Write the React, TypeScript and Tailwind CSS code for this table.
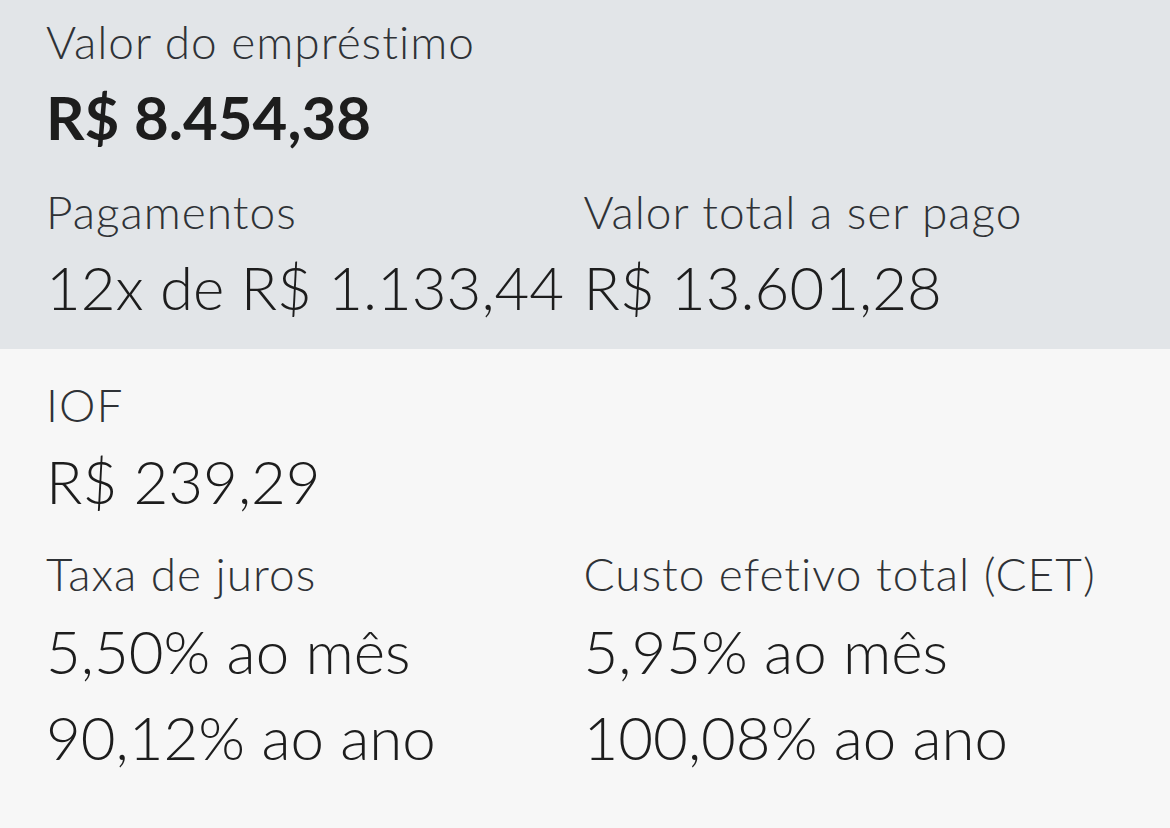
import React from 'react';

const font = { fontFamily: 'Lato, "Open Sans", sans-serif' };

const Label: React.FC<{ children: React.ReactNode }> = ({ children }) => (
  <div className="text-[46px] leading-[56px] font-light tracking-[1px] text-[#2f3236] whitespace-nowrap">{children}</div>
);

const Value: React.FC<{ children: React.ReactNode; bold?: boolean }> = ({ children, bold }) => (
  <div
    className={
      bold
        ? 'text-[60px] leading-[80px] font-bold text-[#1d1d1d] whitespace-nowrap'
        : 'text-[60px] leading-[80px] font-light text-[#1d1d1d] whitespace-nowrap'
    }
  >
    {children}
  </div>
);

export default function App() {
  return (
    <div className="w-[1170px] h-[828px] bg-[#f7f7f7] overflow-hidden" style={font}>
      {/* Resumo do empréstimo */}
      <div className="bg-[#e2e5e8] pl-[46px] pr-[49px] pt-[14px] pb-[22px]">
        <Label>Valor do empréstimo</Label>
        <div className="mt-[7px]">
          <Value bold>R$ 8.454,38</Value>
        </div>
        <div className="grid grid-cols-2 mt-[27px]">
          <div>
            <Label>Pagamentos</Label>
            <div className="mt-[7px]">
              <Value>12x de R$ 1.133,44</Value>
            </div>
          </div>
          <div>
            <Label>Valor total a ser pago</Label>
            <div className="mt-[7px]">
              <Value>R$ 13.601,28</Value>
            </div>
          </div>
        </div>
      </div>

      {/* Taxas */}
      <div className="pl-[46px] pr-[49px] pt-[28px]">
        <Label>IOF</Label>
        <div className="mt-[8px]">
          <Value>R$ 239,29</Value>
        </div>
        <div className="grid grid-cols-2 mt-[25px]">
          <div>
            <Label>Taxa de juros</Label>
            <div className="mt-[9px] flex flex-col gap-[6px]">
              <Value>5,50% ao mês</Value>
              <Value>90,12% ao ano</Value>
            </div>
          </div>
          <div>
            <Label>Custo efetivo total (CET)</Label>
            <div className="mt-[9px] flex flex-col gap-[6px]">
              <Value>5,95% ao mês</Value>
              <Value>100,08% ao ano</Value>
            </div>
          </div>
        </div>
      </div>
    </div>
  );
}
